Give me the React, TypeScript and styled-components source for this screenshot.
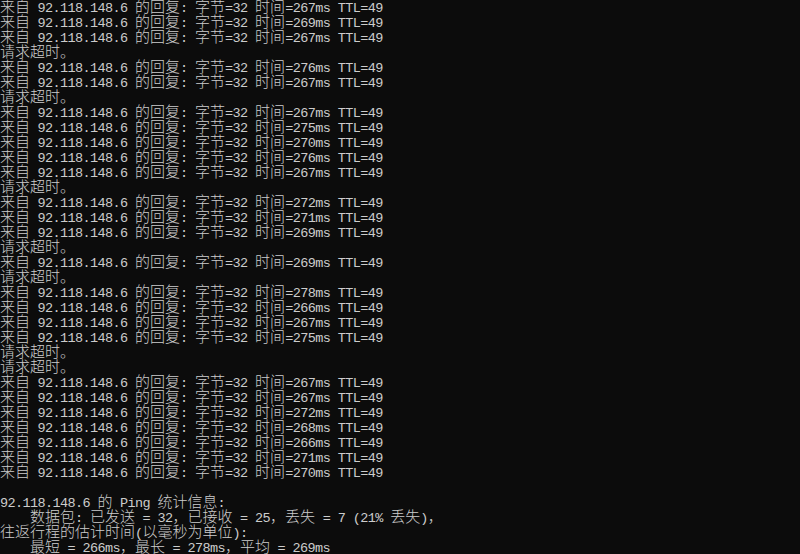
import React from "react";
import styled, { createGlobalStyle } from "styled-components";

const Global = createGlobalStyle`
  html, body {
    margin: 0;
    padding: 0;
    background: #0c0c0c;
  }
  body {
    width: 800px;
    height: 554px;
    overflow: hidden;
  }
`;

const Screen = styled.div`
  width: 800px;
  height: 554px;
  overflow: hidden;
  background: #0c0c0c;
`;

const Console = styled.div`
  margin-top: -2px;
  color: #cccccc;
  display: flex;
  flex-direction: column;
`;

const Line = styled.div`
  height: 15px;
  line-height: 15px;
  white-space: pre;
  flex: none;
  font-family: "Liberation Mono", "DejaVu Sans Mono", monospace;
  font-size: 13.5px;
`;

const Wide = styled.span`
  font-family: "Noto Sans CJK SC", "Noto Sans CJK JP", sans-serif;
  font-size: 15px;
  line-height: 15px;
  font-weight: 300;
`;

const Narrow = styled.span`
  font-family: "Liberation Mono", monospace;
  font-size: 13.5px;
  letter-spacing: -0.6px;
  line-height: 15px;
`;

const CJK = /([\u3000-\u303f\u4e00-\u9fff\uff00-\uffef]+)/;

function TermLine({ text }: { text: string }) {
  const parts = text.split(CJK).filter((p) => p.length > 0);
  return (
    <Line>
      {parts.length === 0
        ? " "
        : parts.map((p, i) =>
            CJK.test(p) ? <Wide key={i}>{p}</Wide> : <Narrow key={i}>{p}</Narrow>
          )}
    </Line>
  );
}

const seq: (number | null)[] = [
  267, 269, 267, null, 276, 267, null, 267, 275, 270, 276, 267, null,
  272, 271, 269, null, 269, null, 278, 266, 267, 275, null, null,
  267, 267, 272, 268, 266, 271, 270,
];

const lines: string[] = [
  ...seq.map((t) =>
    t === null
      ? "请求超时。"
      : `来自 92.118.148.6 的回复: 字节=32 时间=${t}ms TTL=49`
  ),
  "",
  "92.118.148.6 的 Ping 统计信息:",
  "    数据包: 已发送 = 32，已接收 = 25，丢失 = 7 (21% 丢失)，",
  "往返行程的估计时间(以毫秒为单位):",
  "    最短 = 266ms，最长 = 278ms，平均 = 269ms",
];

export default function App() {
  return (
    <>
      <Global />
      <Screen>
        <Console>
          {lines.map((l, i) => (
            <TermLine key={i} text={l} />
          ))}
        </Console>
      </Screen>
    </>
  );
}
